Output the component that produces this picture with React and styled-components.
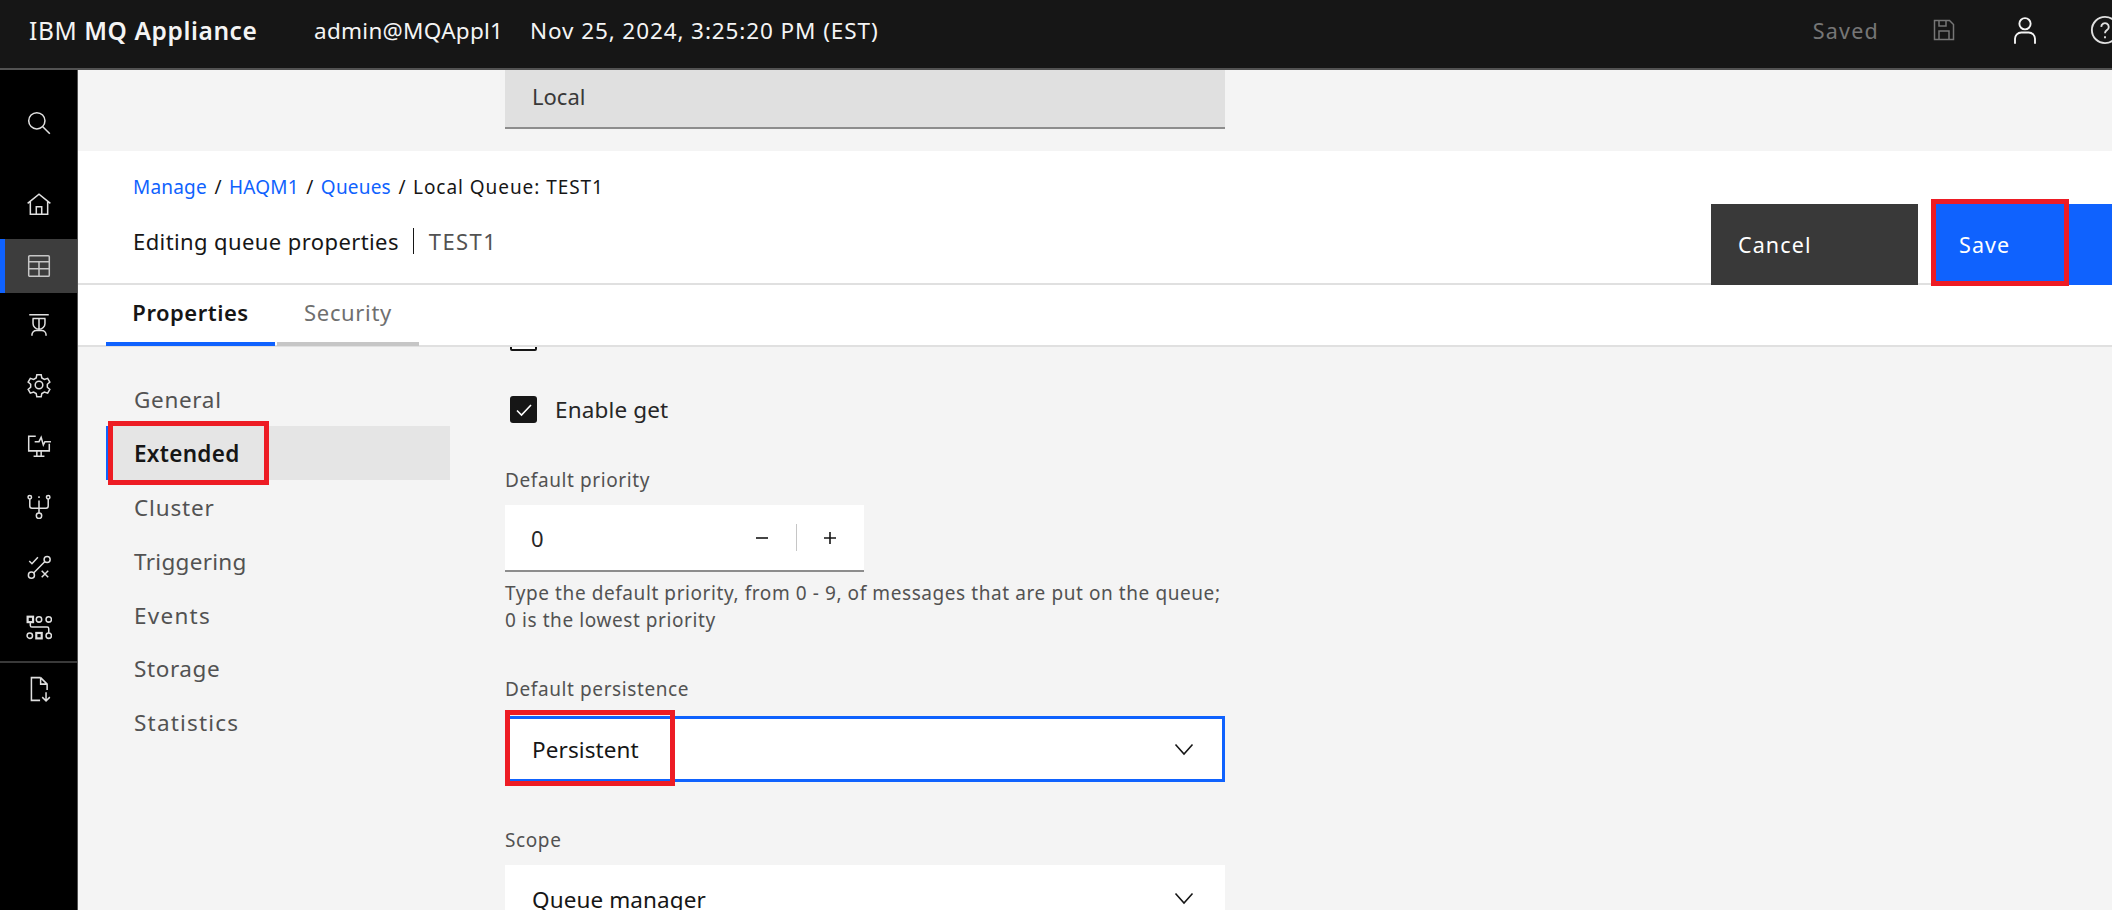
import React from "react";
import styled, { createGlobalStyle } from "styled-components";

const Global = createGlobalStyle`
  html, body { margin: 0; padding: 0; height: 100%; overflow: hidden; background: #f4f4f4; }
  body { font-family: "Noto Sans", "Open Sans", sans-serif; color: #161616; }
  * { box-sizing: border-box; }
`;

const Page = styled.div`
  width: 2112px; height: 910px; overflow: hidden;
  display: flex; flex-direction: column;
`;

const TopBar = styled.header`
  height: 70px; flex: none; background: #161616; border-bottom: 2px solid #525252;
  display: flex; align-items: center; color: #f4f4f4; padding-bottom: 8px; overflow: hidden;
`;
const Brand = styled.div`
  font-size: 24.5px; margin-left: 29px; width: 285px; letter-spacing: 0.6px; white-space: nowrap;
  b { font-weight: 600; }
`;
const TopText = styled.div`
  font-size: 22.5px; white-space: nowrap; letter-spacing: ${p => p.$ls}px; width: ${p => p.$w}px; flex: none;
`;
const Spacer = styled.div`flex: 1;`;
const Saved = styled.div`
  font-size: 21.5px; color: #767676; margin-right: 53px; letter-spacing: 1.2px;
`;
const TopIcon = styled.svg`
  width: ${p => p.$s}px; height: ${p => p.$s}px; flex: none; margin-left: ${p => p.$ml}px; margin-right: ${p => p.$mr || 0}px;
  fill: none; stroke: ${p => p.$c}; stroke-width: 1.5;
`;

const Body = styled.div`flex: 1; display: flex; min-height: 0;`;

const Rail = styled.nav`
  width: 78px; flex: none; background: #000; border-right: 1px solid #525252;
  display: flex; flex-direction: column; padding-top: 23px;
`;
const RailSearch = styled.div`
  height: 60px; display: flex; align-items: center; justify-content: center; margin-bottom: 21px; color: #e0e0e0;
`;
const RailItem = styled.div`
  height: ${p => p.$h || 60.5}px; display: flex; align-items: center; justify-content: center; color: #e0e0e0;
  position: relative;
  ${p => p.$active && `
    background: #3d3d3d; height: 54px; margin: 4px 0 2px; color: #c6c6c6;
    box-shadow: inset 5px 0 0 #0f62fe;
  `}
`;
const RailRule = styled.div`height: 2px; background: #393939; margin-top: 3px;`;
const RailIcon = styled.svg`
  width: 26px; height: 26px; fill: none; stroke: currentColor; stroke-width: 1.4;
`;

const Main = styled.main`flex: 1; min-width: 0; display: flex; flex-direction: column; position: relative;`;

const TopStrip = styled.div`
  height: 81px; flex: none; background: #f4f4f4; padding-left: 427px;
`;
const LocalBox = styled.div`
  width: 720px; height: 59px; background: #e0e0e0; border-bottom: 2px solid #8d8d8d;
  display: flex; align-items: center; padding: 0 0 5px 27px; font-size: 22px; color: #393939;
`;

const PageHead = styled.section`
  height: 134px; flex: none; background: #fff; border-bottom: 2px solid #e0e0e0;
  display: flex; justify-content: space-between; align-items: flex-end; padding-left: 55px;
`;
const HeadText = styled.div`align-self: flex-start; padding-top: 24px;`;
const Crumbs = styled.div`
  font-size: 19px; line-height: 24px; display: flex; gap: 7.5px; color: #161616; white-space: nowrap;
  a { color: #0f62fe; letter-spacing: 0.2px; }
`;
const CrumbCurrent = styled.span`letter-spacing: 0.95px;`;
const TitleRow = styled.div`
  display: flex; align-items: center; margin-top: 28px; font-size: 22px; letter-spacing: 0.4px; line-height: 28px;
`;
const TitleRule = styled.span`width: 1px; height: 26px; background: #161616; margin: 0 15px 0 14px;`;
const TitleName = styled.span`color: #525252; letter-spacing: 1.4px;`;

const Actions = styled.div`display: flex; gap: 18px; margin-bottom: -2px;`;
const Btn = styled.button`
  height: 81px; width: ${p => p.$w}px; border: 0; border-radius: 0; background: ${p => p.$bg}; color: #fff;
  font: inherit; font-size: 21.5px; letter-spacing: 1.1px; text-align: left; padding: 0 0 0 ${p => p.$pl}px; position: relative;
`;
const RedBox = styled.span`
  position: absolute; border: 5px solid #ed1c24; pointer-events: none;
  left: ${p => p.$l}px; top: ${p => p.$t}px; width: ${p => p.$w}px; height: ${p => p.$h}px;
`;

const Tabs = styled.div`
  height: 62px; flex: none; background: #fff; border-bottom: 2px solid #e0e0e0;
  display: flex; padding-left: 28px;
`;
const Tab = styled.div`
  width: ${p => p.$w}px; height: 61px; padding-top: 13px; text-align: center; margin-right: 2px;
  font-size: 22px; letter-spacing: ${p => p.$on ? 0.5 : 0.65}px; line-height: 28px;
  font-weight: ${p => p.$on ? 600 : 400}; color: ${p => p.$on ? "#161616" : "#6f6f6f"};
  border-bottom: 4px solid ${p => p.$on ? "#0f62fe" : "#c6c6c6"};
`;

const Panel = styled.div`flex: 1; min-height: 0; display: flex; overflow: hidden; background: #f4f4f4;`;
const SideNav = styled.div`width: 372px; flex: none; padding: 25px 0 0 30px; display: flex; flex-direction: column;`;
const NavItem = styled.div`
  height: 53.8px; width: 342px; display: flex; align-items: center; padding: 2px 0 0 26px; position: relative;
  font-size: 22.5px; letter-spacing: ${p => p.$ls}px; color: #525252;
  ${p => p.$on && `background: #e5e5e5; color: #161616; font-weight: 600; box-shadow: -2px 0 0 #0f62fe;`}
`;

const Form = styled.div`
  flex: none; padding-left: 55px; width: 775px; display: flex; flex-direction: column; position: relative;
  & > * { flex: none; }
`;
const ClippedBox = styled.div`
  width: 27px; height: 27px; margin: -23px 0 0 5px; background: #fff; border: 2px solid #161616; border-radius: 2px;
`;
const CheckRow = styled.div`
  display: flex; align-items: center; gap: 18px; margin: 45px 0 0 5px; height: 27px;
  font-size: 22.5px; letter-spacing: 0.15px; color: #262626;
`;
const CheckBox = styled.span`
  width: 27px; height: 27px; border-radius: 3px; background: #161616; display: flex; align-items: center; justify-content: center;
`;
const Label = styled.div`
  font-size: 19px; line-height: 24px; letter-spacing: 0.6px; color: #525252; margin-top: ${p => p.$mt}px;
`;
const NumBox = styled.div`
  width: 359px; height: 67px; margin-top: 13px; background: #fff; border-bottom: 2px solid #8d8d8d;
  display: flex; align-items: center; padding-left: 26px; font-size: 22px; color: #262626;
`;
const NumVal = styled.span`flex: 1;`;
const StepGlyph = styled.svg`width: 18px; height: 18px; stroke: #161616; stroke-width: 1.6; fill: none;`;
const StepRule = styled.span`width: 1px; height: 27px; background: #c6c6c6; margin: 0 24px 0 25px;`;
const StepEnd = styled.span`width: 25px; flex: none;`;
const Help = styled.div`
  width: 740px; margin-top: 8px; font-size: 19px; line-height: 27px; letter-spacing: 0.58px; color: #525252; white-space: nowrap;
`;
const Select = styled.div`
  width: 720px; height: ${p => p.$focus ? 66 : 68}px; background: #fff; margin-top: ${p => p.$mt}px; position: relative;
  border: ${p => p.$focus ? "3px solid #0f62fe" : "0"};
  display: flex; align-items: center; justify-content: space-between;
  padding: 0 ${p => p.$focus ? 26 : 29}px 0 ${p => p.$focus ? 24 : 27}px; font-size: 22.5px; letter-spacing: 0.1px; color: #161616;
`;
const Chevron = styled.svg`width: 24px; height: 24px; fill: none; stroke: #161616; stroke-width: 1.6;`;

const Ic = (p) => <RailIcon viewBox="0 0 24 24" {...p} />;

export default function App() {
  return (
    <Page>
      <Global />
      <TopBar>
        <Brand>IBM <b>MQ Appliance</b></Brand>
        <TopText $w={216} $ls={0.27}>admin@MQAppl1</TopText>
        <TopText $w={348} $ls={0.9}>Nov 25, 2024, 3:25:20 PM (EST)</TopText>
        <Spacer />
        <Saved>Saved</Saved>
        <TopIcon viewBox="0 0 24 24" $s={24} $ml={0} $c="#767676">
          <path d="M2.5 2.5h15l4 4v15h-19z" />
          <path d="M7 21.5V13h10v8.5M7 2.5V8h7V2.500" />
        </TopIcon>
        <TopIcon viewBox="0 0 24 24" $s={30} $ml={54} $c="#f4f4f4">
          <circle cx="12" cy="7" r="4.5" />
          <path d="M4 23v-4a5 5 0 0 1 5-5h6a5 5 0 0 1 5 5v4" />
        </TopIcon>
        <TopIcon viewBox="0 0 24 24" $s={30} $ml={50} $mr={-8} $c="#e0e0e0">
          <circle cx="12" cy="12" r="10.5" />
          <path d="M9 9.5a3 3 0 1 1 4.5 2.600c-1 .6-1.500 1.200-1.500 2.400" />
          <path d="M12 17v1.600" />
        </TopIcon>
      </TopBar>
      <Body>
        <Rail>
          <RailSearch>
            <Ic><circle cx="10" cy="10" r="7.5" /><path d="M15.500 15.500L22 22" /></Ic>
          </RailSearch>
          <RailItem>
            <Ic><path d="M1.500 11.500L12 3l10.500 8.500M4 9.800V21.500h16V9.800" /><path d="M9.500 21.500v-7h5v7" /></Ic>
          </RailItem>
          <RailItem $active>
            <Ic><rect x="2.5" y="2.5" width="19" height="19" rx="1" /><path d="M2.500 8h19M2.500 14.500h19M12 8v13.500" /></Ic>
          </RailItem>
          <RailItem>
            <Ic><path d="M3 2.500h18M6 6h12M6.500 6v4.500a5.500 5.500 0 0 0 11 0V6M12 6v10" /><path d="M5.500 22v-1a4 4 0 0 1 4-4h5a4 4 0 0 1 4 4v1" /></Ic>
          </RailItem>
          <RailItem>
            <Ic>
              <circle cx="12" cy="12" r="3.5" />
              <path d="M10 2.500h4l.6 3 2.400 1.400 3-1 2 3.400-2.300 2 0 2.800 2.300 2-2 3.400-3-1-2.400 1.400-.6 3h-4l-.6-3-2.400-1.400-3 1-2-3.400 2.300-2 0-2.800-2.300-2 2-3.400 3 1 2.400-1.400z" />
            </Ic>
          </RailItem>
          <RailItem>
            <Ic><path d="M9 3H2.500v13.500h19V10" /><path d="M10 16.500v5M7 21.500h10M14 16.500v5" /><path d="M8 8h4l2-4 2 7 1.500-3H23" /></Ic>
          </RailItem>
          <RailItem>
            <Ic>
              <circle cx="3.5" cy="4" r="1.6" /><circle cx="20.5" cy="4" r="1.6" /><circle cx="12" cy="21" r="2.5" />
              <path d="M3.500 5.500V12q0 2 2 2h13q2 0 2-2V5.500M12 3v1.500M12 7v11.500" />
            </Ic>
          </RailItem>
          <RailItem>
            <Ic>
              <circle cx="19.5" cy="5" r="2.8" /><circle cx="5" cy="19.5" r="2.8" />
              <path d="M17.500 7L7 17.500M3 6.500l2.500 2.500L11 3M14.500 15.500l6 6M20.500 15.500l-6 6" />
            </Ic>
          </RailItem>
          <RailItem>
            <Ic>
              <rect x="1.5" y="2.5" width="5" height="5" strokeWidth="2" /><circle cx="12" cy="5" r="2.5" /><circle cx="21" cy="5" r="2.5" />
              <circle cx="3.5" cy="20" r="2.5" /><rect x="9.5" y="17.5" width="5" height="5" strokeWidth="2" /><circle cx="21" cy="20" r="2.5" />
              <path d="M4 8v2.500q0 1.500 1.500 1.500h14q1.500 0 1.500 1.500v4" />
            </Ic>
          </RailItem>
          <RailRule />
          <RailItem $h={52}>
            <Ic><path d="M13.500 1.500H5v21h8M13.500 1.500v6h6M13.500 1.500l6 6V13M18.500 15v8M15 19.500l3.500 3.500 3.500-3.500" /></Ic>
          </RailItem>
        </Rail>
        <Main>
          <TopStrip><LocalBox>Local</LocalBox></TopStrip>
          <PageHead>
            <HeadText>
              <Crumbs>
                <a>Manage</a><span>/</span><a>HAQM1</a><span>/</span><a>Queues</a><span>/</span><CrumbCurrent>Local Queue: TEST1</CrumbCurrent>
              </Crumbs>
              <TitleRow>
                <span>Editing queue properties</span>
                <TitleRule />
                <TitleName>TEST1</TitleName>
              </TitleRow>
            </HeadText>
            <Actions>
              <Btn $w={207} $bg="#393939" $pl={27}>Cancel</Btn>
              <Btn $w={176} $bg="#0f62fe" $pl={23}>
                Save
                <RedBox $l={-5} $t={-5} $w={138} $h={87} />
              </Btn>
            </Actions>
          </PageHead>
          <Tabs>
            <Tab $w={169} $on>Properties</Tab>
            <Tab $w={142}>Security</Tab>
          </Tabs>
          <Panel>
            <SideNav>
              <NavItem $ls={0.67}>General</NavItem>
              <NavItem $on $ls={0.3}>
                Extended
                <RedBox $l={0} $t={-5} $w={161} $h={64} />
              </NavItem>
              <NavItem $ls={0.85}>Cluster</NavItem>
              <NavItem $ls={0.3}>Triggering</NavItem>
              <NavItem $ls={1.25}>Events</NavItem>
              <NavItem $ls={0.6}>Storage</NavItem>
              <NavItem $ls={1.2}>Statistics</NavItem>
            </SideNav>
            <Form>
              <ClippedBox />
              <CheckRow>
                <CheckBox>
                  <svg width="18" height="18" viewBox="0 0 18 18" fill="none" stroke="#fff" strokeWidth="1.6"><path d="M2 9.500l4.500 4.500L16 4" /></svg>
                </CheckBox>
                Enable get
              </CheckRow>
              <Label $mt={45}>Default priority</Label>
              <NumBox>
                <NumVal>0</NumVal>
                <StepGlyph viewBox="0 0 18 18"><path d="M3 9h12" /></StepGlyph>
                <StepRule />
                <StepGlyph viewBox="0 0 18 18"><path d="M3 9h12M9 3v12" /></StepGlyph>
                <StepEnd />
              </NumBox>
              <Help>
                Type the default priority, from 0 - 9, of messages that are put on the queue;<br />
                0 is the lowest priority
              </Help>
              <Label $mt={43}>Default persistence</Label>
              <Select $focus $mt={15}>
                Persistent
                <Chevron viewBox="0 0 24 24"><path d="M3.500 7.500L12 17l8.500-9.500" /></Chevron>
                <RedBox $l={-3} $t={-9} $w={170} $h={76} />
              </Select>
              <Label $mt={46}>Scope</Label>
              <Select $mt={13}>
                Queue manager
                <Chevron viewBox="0 0 24 24" style={{ marginTop: -2 }}><path d="M3.500 7.500L12 17l8.500-9.500" /></Chevron>
              </Select>
            </Form>
          </Panel>
        </Main>
      </Body>
    </Page>
  );
}
